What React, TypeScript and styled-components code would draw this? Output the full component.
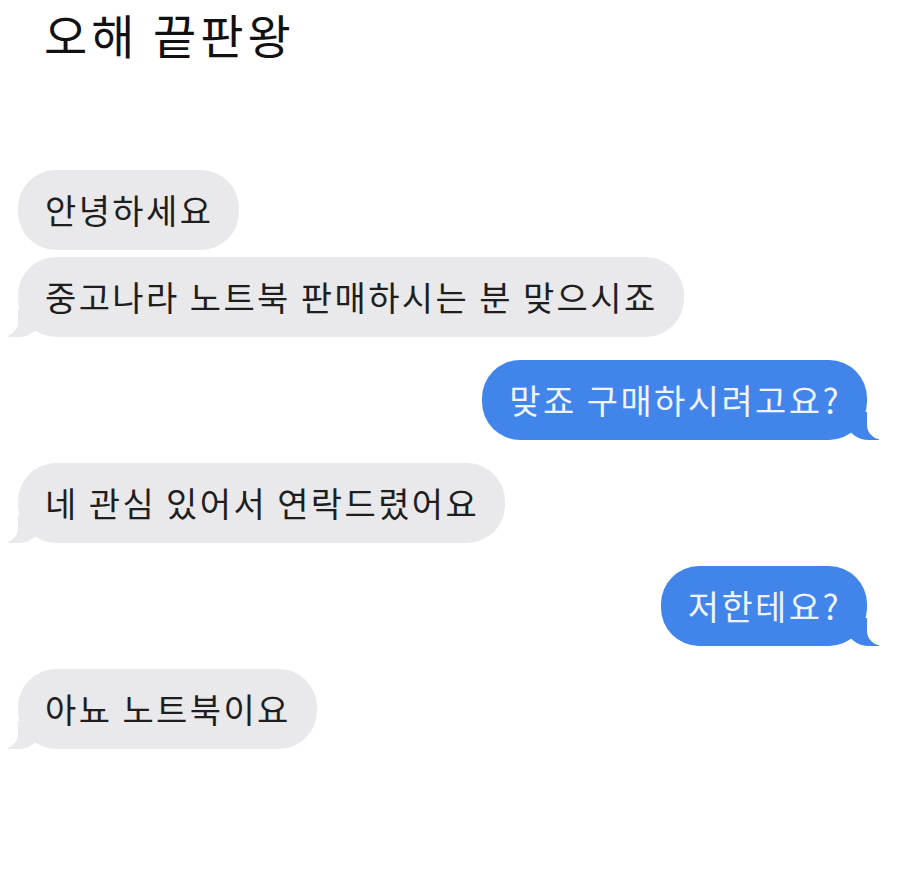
import React from 'react';
import styled, { createGlobalStyle, css } from 'styled-components';

type Side = 'in' | 'out';

type Message = {
  side: Side,
  lines: string[],
};

const thread: Message[] = [
  { side: 'in', lines: ['안녕하세요', '중고나라 노트북 판매하시는 분 맞으시죠'] },
  { side: 'out', lines: ['맞죠 구매하시려고요?'] },
  { side: 'in', lines: ['네 관심 있어서 연락드렸어요'] },
  { side: 'out', lines: ['저한테요?'] },
  { side: 'in', lines: ['아뇨 노트북이요'] },
];

const GlobalStyle = createGlobalStyle`
  html, body {
    margin: 0;
    padding: 0;
    background: #ffffff;
  }

  body {
    font-family: "Noto Sans CJK KR", "Noto Sans", sans-serif;
  }
`;

const Page = styled.main`
  width: 900px;
  min-height: 881px;
  box-sizing: border-box;
  padding: 6px 0 0;
`;

const Title = styled.h1`
  margin: 0 0 0 44px;
  font-size: 47px;
  line-height: 56px;
  font-weight: 400;
  color: #111111;
  letter-spacing: 4px;
`;

const Thread = styled.section`
  display: flex;
  flex-direction: column;
  gap: 23px;
  margin-top: 108px;
  padding: 0 33px 0 18px;
`;

const Group = styled.div<{ $side: Side }>`
  display: flex;
  flex-direction: column;
  gap: 7px;
  align-items: ${(p) => (p.$side === 'out' ? 'flex-end' : 'flex-start')};
`;

const tailIn = css`
  &::before {
    content: '';
    position: absolute;
    bottom: 0;
    left: -10px;
    width: 32px;
    height: 28px;
    background: #e9e9eb;
    border-bottom-right-radius: 22px 18px;
  }

  &::after {
    content: '';
    position: absolute;
    bottom: 0;
    left: -34px;
    width: 34px;
    height: 28px;
    background: #ffffff;
    border-bottom-right-radius: 16px 15px;
  }
`;

const tailOut = css`
  &::before {
    content: '';
    position: absolute;
    bottom: 0;
    right: -12px;
    width: 32px;
    height: 28px;
    background: #4285ea;
    border-bottom-left-radius: 22px 18px;
  }

  &::after {
    content: '';
    position: absolute;
    bottom: 0;
    right: -34px;
    width: 34px;
    height: 28px;
    background: #ffffff;
    border-bottom-left-radius: 16px 15px;
  }
`;

const Bubble = styled.div<{ $side: Side, $tail: boolean }>`
  position: relative;
  z-index: 0;
  padding: 20px 26px 20px 27px;
  border-radius: 38px;
  font-size: 34px;
  line-height: 40px;
  letter-spacing: 2.4px;
  white-space: nowrap;
  background: ${(p) => (p.$side === 'out' ? '#4285ea' : '#e9e9eb')};
  color: ${(p) => (p.$side === 'out' ? '#eef3fd' : '#1e1e1e')};

  &::before,
  &::after {
    z-index: -1;
  }

  ${(p) => p.$tail && (p.$side === 'out' ? tailOut : tailIn)}
`;

const App = () => (
  <>
    <GlobalStyle />
    <Page>
      <Title>오해 끝판왕</Title>
      <Thread>
        {thread.map((msg, i) => (
          <Group key={i} $side={msg.side}>
            {msg.lines.map((line, j) => (
              <Bubble key={j} $side={msg.side} $tail={j === msg.lines.length - 1}>
                {line}
              </Bubble>
            ))}
          </Group>
        ))}
      </Thread>
    </Page>
  </>
);

export default App;
